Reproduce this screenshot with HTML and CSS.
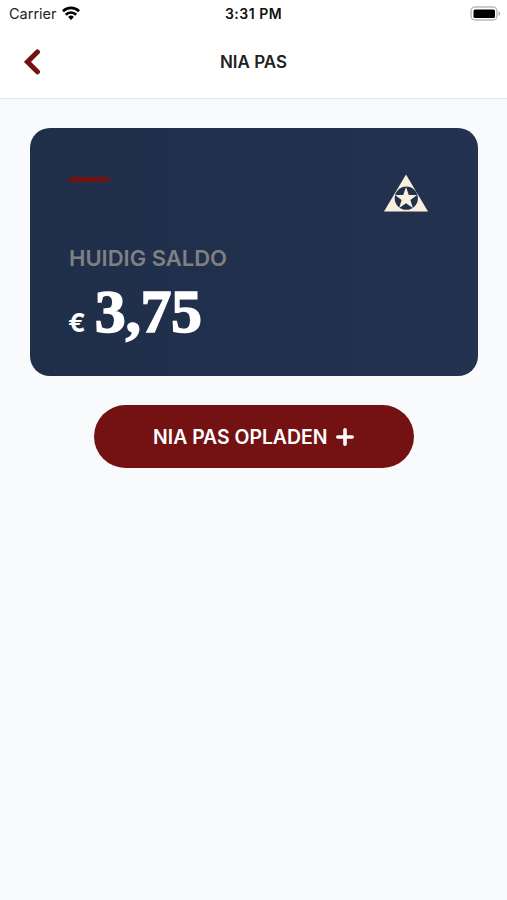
FILE: index.html
```html
<!DOCTYPE html>
<html lang="nl">
  <head>
    <meta charset="UTF-8" />
    <meta name="viewport" content="width=device-width, initial-scale=1.0" />
    <title>NIA Pas</title>
    <link rel="stylesheet" href="styles.css">
  </head>
  <body>
    <header class="header">
      <div class="status-bar">
        <div class="carrier">
          <span>Carrier</span>
          <svg class="wifi" viewBox="0 0 18 14" width="18" height="14">
            <g fill="none" stroke="#000" stroke-width="2.7">
              <path d="M0.9 5.2a11.6 11.6 0 0 1 16.2 0" />
              <path d="M3.8 8.7a7.3 7.3 0 0 1 10.4 0" />
            </g>
            <path d="M9 14l-2.9-3.1a4.2 4.2 0 0 1 5.8 0z" />
          </svg>
        </div>
        <span class="time">3:31 PM</span>
        <svg class="battery" viewBox="0 0 31 16" width="31" height="16">
          <rect x="1" y="1" width="26" height="13" rx="4" fill="#fff" stroke="#bbb" stroke-width="1.5" />
          <rect x="3.5" y="3.5" width="21.5" height="8.5" rx="1.5" />
          <path d="M28.6 5.2a2.6 2.6 0 0 1 0 4.8z" fill="#aaa" />
        </svg>
      </div>
      <div class="nav">
        <button class="btn-back" aria-label="Terug">
          <svg viewBox="0 0 16 26" width="16" height="26">
            <path d="M13.4 3L3.4 12.9l10 9.9" fill="none" stroke="#741113" stroke-width="5" stroke-linecap="round" />
          </svg>
        </button>
        <h1 class="title">NIA PAS</h1>
      </div>
    </header>

    <main class="content">
      <section class="card">
        <div class="card-top">
          <div class="line"></div>
          <svg class="logo" viewBox="0 0 44 38" width="44" height="38">
            <path d="M22 0.5L44 37.5H0z" fill="#f8efdf" />
            <circle cx="22.3" cy="24.2" r="11.6" fill="#20304d" />
            <path d="M22 13l2.8 7.9 8.2.1-6.6 5 2.5 8-6.9-4.8-6.9 4.8 2.5-8-6.6-5 8.2-.1z" fill="#f8efdf" />
          </svg>
        </div>
        <div class="label">HUIDIG SALDO</div>
        <div class="balance">
          <span class="currency">€</span>
          <span class="amount">3,75</span>
        </div>
      </section>

      <button class="btn">
        <span>NIA PAS OPLADEN</span>
        <svg viewBox="0 0 18 18" width="18" height="18">
          <path d="M9 1.8v14.4M1.8 9h14.4" stroke="#fff" stroke-width="3.6" stroke-linecap="round" />
        </svg>
      </button>
    </main>
  </body>
</html>
```

FILE: styles.css
```css
body {
  font-family: Inter, "Liberation Sans", sans-serif;
  background-color: #f8fafc;
  color: #222;
  margin: 0;
}

.header {
  height: 99px;
  box-sizing: border-box;
  background-color: #fff;
  border-bottom: 1px solid #e5e7e9;
}

.status-bar {
  display: grid;
  grid-template-columns: 1fr auto 1fr;
  align-items: center;
  height: 27px;
  padding: 0 6px 0 9px;
  font-size: 14.5px;
}

.carrier {
  display: flex;
  align-items: center;
  gap: 5px;
}

.wifi {
  margin-top: -2px;
}

.time {
  margin-right: 3px;
  font-weight: 600;
  font-size: 14px;
  letter-spacing: 0.5px;
  color: #111;
}

.battery {
  justify-self: end;
}

.nav {
  display: grid;
  grid-template-columns: 1fr auto 1fr;
  align-items: center;
  height: 70px;
  padding: 0 24px;
}

.btn-back {
  display: flex;
  width: 16px;
  padding: 0;
  border: none;
  background: none;
  cursor: pointer;
}

.title {
  margin: 0;
  font-size: 17px;
  font-weight: 600;
}

.content {
  padding: 29px 29.5px 0 30px;
}

/* Balance card */
.card {
  height: 247.5px;
  box-sizing: border-box;
  padding: 46px 50px 0 39px;
  border-radius: 20px;
  background: linear-gradient(to right, #1f2f4a, #22324f);
}

.card-top {
  display: flex;
  justify-content: space-between;
  height: 70px;
}

.line {
  width: 40px;
  height: 5px;
  margin-top: 3px;
  background-color: #741113;
}

.label {
  font-size: 22px;
  font-weight: 600;
  line-height: 28px;
  color: #808083;
}

.balance {
  display: flex;
  align-items: baseline;
  gap: 9px;
  margin-top: 4px;
  margin-left: -1px;
  color: #fff;
}

.currency {
  font-size: 26px;
  font-weight: 700;
}

.amount {
  font-family: "Liberation Serif", serif;
  font-size: 62px;
  font-weight: 700;
  line-height: 70px;
  letter-spacing: -0.4px;
  -webkit-text-stroke: 1.5px #fff; /* heavier display digits */
}

/* Top up button */
.btn {
  display: flex;
  align-items: center;
  justify-content: center;
  gap: 9px;
  width: 320px;
  height: 63px;
  margin: 29.5px auto 0;
  border: none;
  border-radius: 32px;
  background-color: #741113;
  color: #fff;
  font-family: inherit;
  font-size: 19.4px;
  font-weight: 600;
  cursor: pointer;
}
```
